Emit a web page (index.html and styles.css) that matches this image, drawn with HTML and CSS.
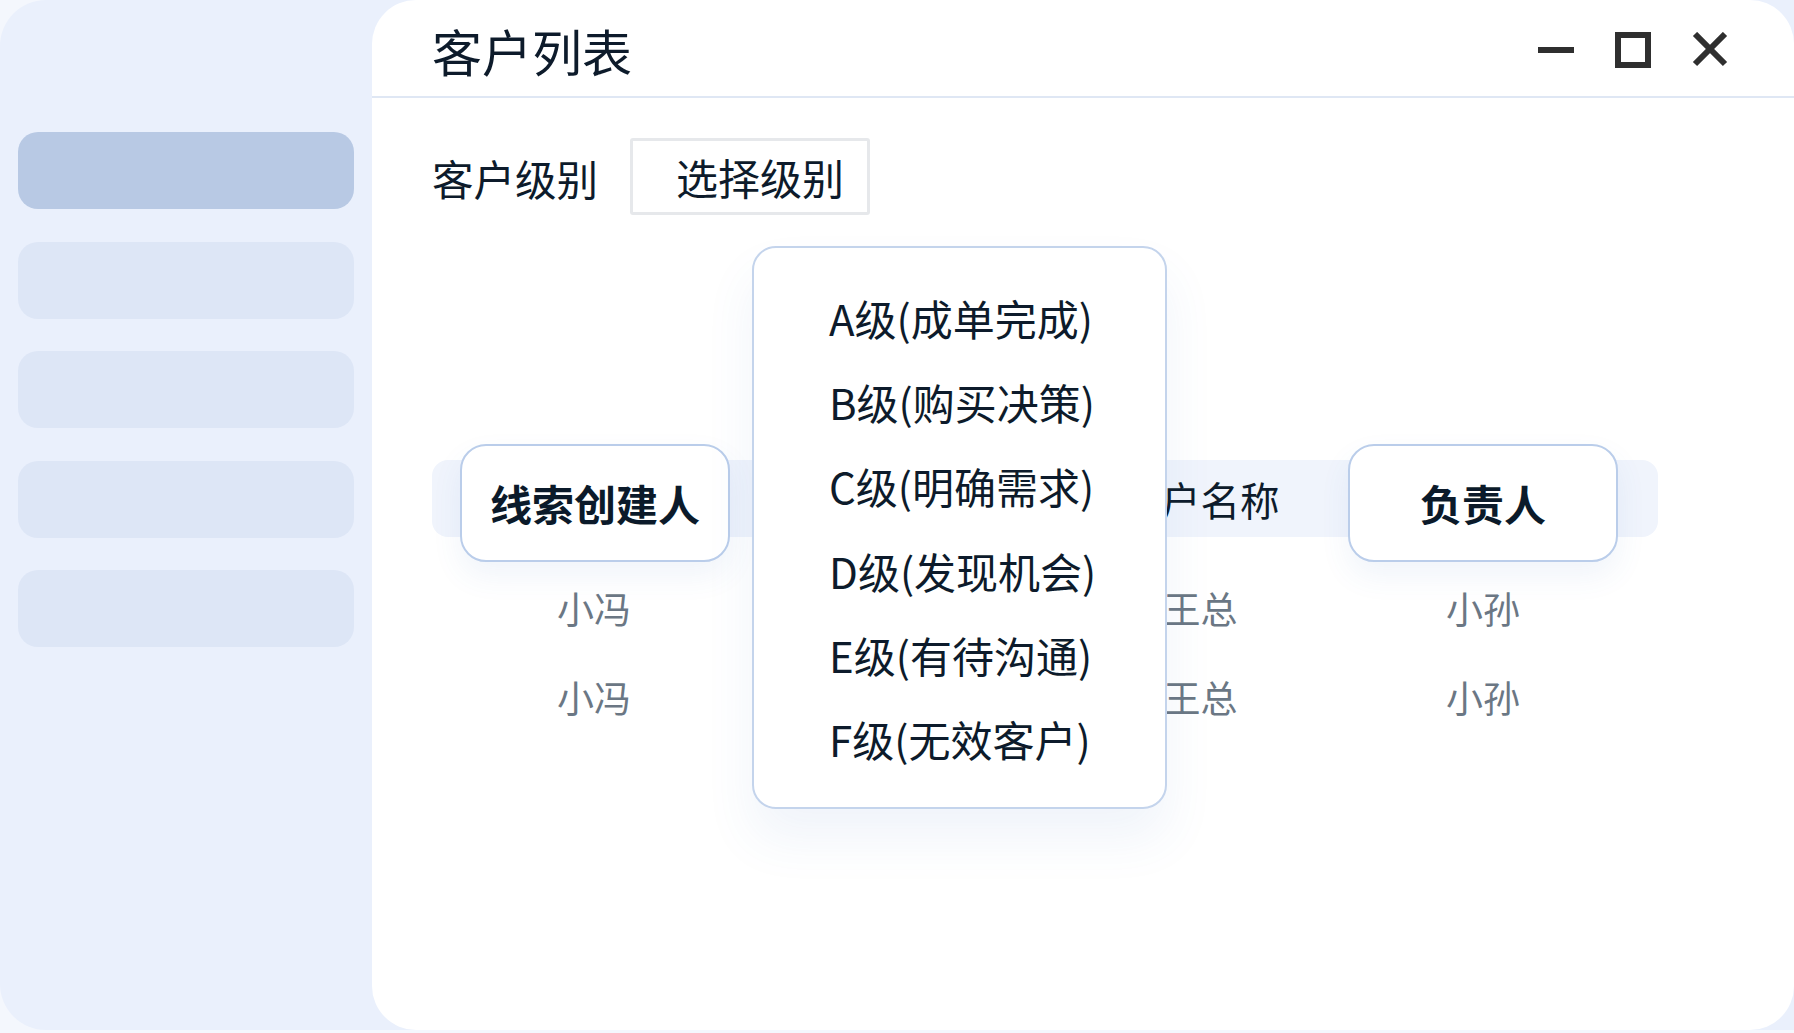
FILE: index.html
```html
<!DOCTYPE html>
<html lang="zh-CN">
<head>
    <meta charset="UTF-8">
    <meta name="viewport" content="width=device-width, initial-scale=1.0">
    <title>客户列表</title>
    <link rel="stylesheet" href="styles.css">
</head>
<body>
    <div class="window">
        <aside class="sidebar">
            <div class="side-item active"></div>
            <div class="side-item"></div>
            <div class="side-item"></div>
            <div class="side-item"></div>
            <div class="side-item"></div>
        </aside>

        <main class="panel">
            <header class="panel-head">
                <h1>客户列表</h1>
                <div class="win-btns">
                    <svg class="win-btn" viewBox="0 0 36 36"><rect x="0" y="15" width="36" height="6" fill="#2f2f2f"/></svg>
                    <svg class="win-btn" viewBox="0 0 36 36"><rect x="3" y="3" width="30" height="30" fill="none" stroke="#2f2f2f" stroke-width="6"/></svg>
                    <svg class="win-btn" viewBox="0 0 36 36"><path d="M3 2 L33 32 M33 2 L3 32" stroke="#2f2f2f" stroke-width="6" fill="none"/></svg>
                </div>
            </header>

            <div class="filter">
                <label for="level">客户级别</label>
                <div class="select" id="level">选择级别</div>
            </div>

            <section class="table">
                <div class="row head">
                    <div class="cell"><span class="card first">线索创建人</span></div>
                    <div class="cell">客户级别</div>
                    <div class="cell">客户名称</div>
                    <div class="cell"><span class="card">负责人</span></div>
                </div>
                <div class="row">
                    <div class="cell">小冯</div>
                    <div class="cell">A级</div>
                    <div class="cell">王总</div>
                    <div class="cell">小孙</div>
                </div>
                <div class="row">
                    <div class="cell">小冯</div>
                    <div class="cell">B级</div>
                    <div class="cell">王总</div>
                    <div class="cell">小孙</div>
                </div>
            </section>

            <ul class="dropdown">
                <li>A级(成单完成)</li>
                <li>B级(购买决策)</li>
                <li>C级(明确需求)</li>
                <li>D级(发现机会)</li>
                <li>E级(有待沟通)</li>
                <li>F级(无效客户)</li>
            </ul>
        </main>
    </div>
</body>
</html>
```

FILE: styles.css
```css
body {
    margin: 0;
    background-color: #f4f7fd;
    font-family: "Noto Sans CJK SC", "Noto Sans", sans-serif;
    color: #0d1b2b;
    overflow: hidden;
}

.window {
    display: flex;
    width: 1850px;
    height: 1030px;
    background-color: #eaf0fc;
    border-radius: 46px 0 0 46px;
}

/* left menu placeholders */
.sidebar {
    width: 336px;
    padding: 132px 18px 0 18px;
    display: flex;
    flex-direction: column;
    gap: 32.5px;
}
.side-item {
    height: 77px;
    border-radius: 20px;
    background-color: #dde6f6;
}
.side-item.active {
    background-color: #b8c9e4;
}

.panel {
    position: relative;
    width: 1422px;
    background-color: #ffffff;
    border-radius: 44px;
}

.panel-head {
    height: 96px;
    display: flex;
    align-items: center;
    justify-content: space-between;
    padding: 0 66px 0 60px;
    border-bottom: 2px solid #dfe7f4;
}
.panel-head h1 {
    margin: 0;
    margin-top: 4px;
    font-size: 50px;
    font-weight: 400;
    line-height: 1;
}
.win-btns {
    display: flex;
    gap: 41px;
    padding-top: 4px;
}
.win-btn {
    width: 36px;
    height: 36px;
}

.filter {
    display: flex;
    align-items: center;
    margin: 40px 0 0 60px;
}
.filter label {
    font-size: 41.5px;
    line-height: 1;
    margin-right: 32px;
    padding-top: 4px;
}
.select {
    box-sizing: border-box;
    width: 240px;
    height: 77px;
    border: 3px solid #e6e8eb;
    border-radius: 3px;
    padding-left: 43px;
    font-size: 42px;
    line-height: 71px;
}

.table {
    width: 1226px;
    margin: 245px 0 0 60px;
}
.row {
    display: grid;
    grid-template-columns: 296px 309px 299px 266px;
    padding-left: 14px;
    height: 89px;
    align-items: center;
    font-size: 37px;
    color: #6b7784;
}
.row.head {
    height: 77px;
    margin-bottom: 27px;
    background-color: #f0f4fc;
    border-radius: 16px;
    font-size: 39.5px;
    color: #0d1b2b;
}
.cell {
    display: flex;
    justify-content: center;
    align-items: center;
    line-height: 1;
}
.card {
    box-sizing: border-box;
    flex-shrink: 0;
    width: 270px;
    height: 118px;
    margin: -16px 0 -25px;
    display: flex;
    align-items: center;
    justify-content: center;
    background-color: #ffffff;
    border: 2px solid #bacdea;
    border-radius: 26px;
    box-shadow: 0 14px 30px rgba(70, 110, 190, 0.08);
    font-size: 42px;
    font-weight: 700;
    color: #0b1a2a;
}
.card.first {
    margin-left: 2px;
}

/* open level menu */
.dropdown {
    position: absolute;
    left: 380px;
    top: 246px;
    box-sizing: border-box;
    width: 415px;
    height: 563px;
    margin: 0;
    padding: 28px 0 0 75px;
    list-style: none;
    background-color: #ffffff;
    border: 2px solid #c4d4ec;
    border-radius: 24px;
    box-shadow: 0 30px 50px rgba(70, 110, 190, 0.08);
}
.dropdown li {
    height: 84.2px;
    display: flex;
    align-items: center;
    font-size: 42px;
    line-height: 1;
    color: #0d1b2b;
}
```
